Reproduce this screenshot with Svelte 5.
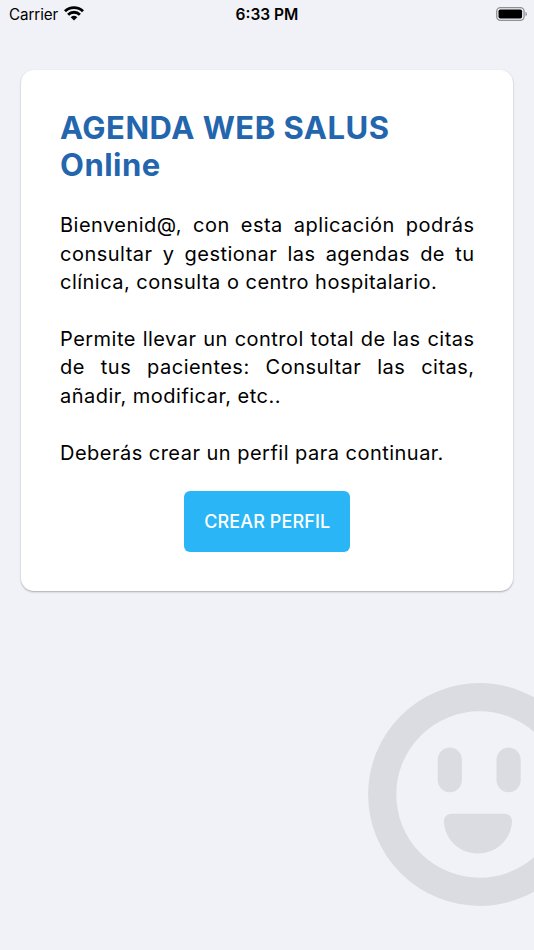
<script lang="ts">
  const carrier = 'Carrier';
  const time = '6:33 PM';

  const paragraphs: string[] = [
    'Bienvenid@, con esta aplicación podrás consultar y gestionar las agendas de tu clínica, consulta o centro hospitalario.',
    'Permite llevar un control total de las citas de tus pacientes: Consultar las citas, añadir, modificar, etc..',
    'Deberás crear un perfil para continuar.',
  ];
</script>

<div class="screen">
  <svg class="face" width="224" height="225" viewBox="0 0 224 225" aria-hidden="true">
    <circle cx="112.5" cy="112.5" r="97.3" fill="none" stroke="#dbdce1" stroke-width="28.2" />
    <rect x="70.7" y="65.6" width="24.2" height="44.6" rx="12.1" />
    <rect x="129.5" y="65.6" width="24.2" height="44.6" rx="12.1" />
    <path d="M84.700 131.800H137.800C141.700 131.800 145.200 135 145 139.500C144.200 157.500 129.700 171.500 111 171.500C92.200 171.500 77.700 157.500 76.900 139.500C76.700 135 80.200 131.800 84.700 131.800Z" />
  </svg>

  <header class="status">
    <div class="left">
      <span>{carrier}</span>
      <svg width="20" height="15" viewBox="0 0 20 15" aria-hidden="true">
        <g fill="none" stroke="#000" stroke-width="2.8">
          <path d="M1 5.300A12.700 12.700 0 0 1 19 5.300" />
          <path d="M4.100 8.700A8.300 8.300 0 0 1 15.900 8.700" />
        </g>
        <path d="M6.700 11.200A5.100 5.100 0 0 1 13.300 11.200L10 14.500Z" />
      </svg>
    </div>
    <strong>{time}</strong>
    <svg class="battery" width="32" height="14" viewBox="0 0 32 14" aria-hidden="true">
      <rect x="0.700" y="0.700" width="27.400" height="12.600" rx="3.800" fill="none" stroke="#8f9094" stroke-width="1.300" />
      <rect x="2.500" y="2.500" width="23.600" height="9" rx="1.800" />
      <path d="M29.500 4.700Q31 5.500 31 7T29.500 9.300Z" fill="#8f9094" />
    </svg>
  </header>

  <main class="card">
    <h1>AGENDA WEB SALUS Online</h1>
    {#each paragraphs as text}
      <p>{text}</p>
    {/each}
    <button type="button">CREAR PERFIL</button>
  </main>
</div>

<style>
  :global(body) {
    margin: 0;
    background: #f1f2f8;
  }
  .screen {
    position: relative;
    height: 950px;
    overflow: hidden;
    background: #f1f2f8;
    font-family: Inter, 'Liberation Sans', sans-serif;
    color: #000;
  }
  .face {
    position: absolute;
    left: 367px;
    top: 682px;
    fill: #dbdce1;
  }
  .status {
    display: grid;
    grid-template-columns: 1fr auto 1fr;
    align-items: center;
    height: 27px;
    padding: 0 6px 0 9px;
    font-size: 15.5px;
  }
  .status strong {
    margin-right: 3px;
    padding-top: 2px;
    font-weight: 600;
    line-height: 20px;
  }
  .left {
    display: flex;
    align-items: center;
    gap: 6px;
  }
  .left span {
    padding-top: 1px;
    font-size: 15.2px;
    letter-spacing: -0.1px;
  }
  .battery {
    justify-self: end;
  }
  .card {
    position: relative;
    box-sizing: border-box;
    height: 521px;
    margin: 43px 21px 0;
    padding: 39px 38.5px 39px 39px;
    border-radius: 13px;
    background: #fff;
    box-shadow: 0 1px 2px rgba(0, 0, 0, 0.3);
  }
  h1 {
    margin: 0 0 28.4px;
    font-size: 31px;
    font-weight: 650;
    line-height: 37px;
    letter-spacing: 0.5px;
    color: #2366ad;
  }
  p {
    margin: 0 0 28.4px;
    font-size: 20px;
    line-height: 28.4px;
    letter-spacing: 0.48px;
    text-align: justify;
  }
  button {
    display: block;
    width: 166px;
    height: 61px;
    margin: -4.4px auto 0;
    padding: 0;
    border: 0;
    border-radius: 6px;
    background: #2ab5f7;
    color: #fff;
    font-family: inherit;
    font-size: 18px;
    font-weight: 500;
    letter-spacing: 0.1px;
  }
</style>
